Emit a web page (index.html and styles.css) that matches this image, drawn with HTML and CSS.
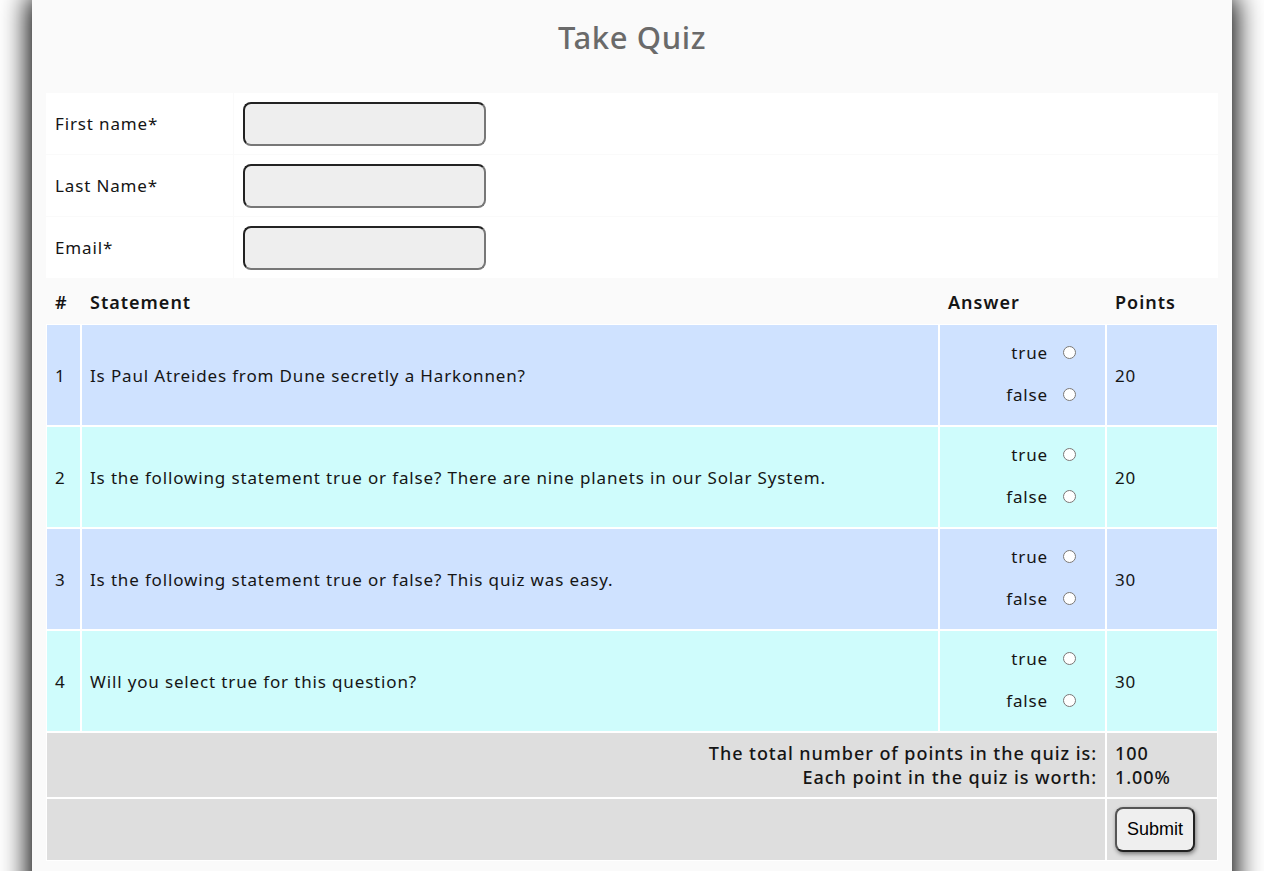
FILE: index.html
```html
<!DOCTYPE html>
<html>
<head>
<meta charset="utf-8">
<title>Take Quiz</title>
<link rel="stylesheet" href="styles.css">
</head>
<body>
<div class="page">
  <h1 class="title">Take Quiz</h1>
  <table class="info">
    <tr><td class="lbl">First name*</td><td><input class="field" type="text"></td></tr>
    <tr><td class="lbl">Last Name*</td><td><input class="field" type="text"></td></tr>
    <tr><td class="lbl">Email*</td><td><input class="field" type="text"></td></tr>
  </table>
  <table class="quiz">
    <thead>
      <tr><th class="c-num">#</th><th class="c-st">Statement</th><th class="c-ans">Answer</th><th class="c-pts">Points</th></tr>
    </thead>
    <tbody>
      <tr class="odd">
        <td>1</td><td>Is Paul Atreides from Dune secretly a Harkonnen?</td>
        <td class="ans"><div class="opt"><span>true</span><input type="radio" name="q1"></div><div class="opt"><span>false</span><input type="radio" name="q1"></div></td>
        <td>20</td>
      </tr>
      <tr class="even">
        <td>2</td><td>Is the following statement true or false? There are nine planets in our Solar System.</td>
        <td class="ans"><div class="opt"><span>true</span><input type="radio" name="q2"></div><div class="opt"><span>false</span><input type="radio" name="q2"></div></td>
        <td>20</td>
      </tr>
      <tr class="odd">
        <td>3</td><td>Is the following statement true or false? This quiz was easy.</td>
        <td class="ans"><div class="opt"><span>true</span><input type="radio" name="q3"></div><div class="opt"><span>false</span><input type="radio" name="q3"></div></td>
        <td>30</td>
      </tr>
      <tr class="even">
        <td>4</td><td>Will you select true for this question?</td>
        <td class="ans"><div class="opt"><span>true</span><input type="radio" name="q4"></div><div class="opt"><span>false</span><input type="radio" name="q4"></div></td>
        <td>30</td>
      </tr>
    </tbody>
    <tfoot>
      <tr class="total">
        <td colspan="3" class="tot-lbl">The total number of points in the quiz is:<br>Each point in the quiz is worth:</td>
        <td class="tot-val">100<br>1.00%</td>
      </tr>
      <tr class="actions">
        <td colspan="3"></td>
        <td><button class="submit" type="button">Submit</button></td>
      </tr>
    </tfoot>
  </table>
</div>
</body>
</html>
```

FILE: styles.css
```css
html, body {
  margin: 0;
  padding: 0;
  background: #fff;
}
body {
  font-family: "Noto Sans", "DejaVu Sans", sans-serif;
  font-size: 17px;
  letter-spacing: 0.85px;
  color: #151515;
  overflow: hidden;
}
.page {
  width: 1172px;
  margin: 0 auto;
  padding: 1px 14px 20px;
  min-height: 900px;
  background: #fafafa;
  box-shadow: 0 0 26px 4px #000;
}
.title {
  margin: 16px 0 35px;
  text-align: center;
  font-size: 31px;
  font-weight: 500;
  letter-spacing: 0.6px;
  color: #6a6a6a;
  line-height: 40px;
}
.info {
  border-collapse: separate;
  border-spacing: 1px;
  margin: 0 -1px;
  width: calc(100% + 2px);
}
.info td {
  background: #fff;
  height: 61px;
  padding: 0 9px;
}
.info td.lbl {
  width: 169px;
}
.field {
  box-sizing: border-box;
  width: 243px;
  height: 44px;
  background: #eee;
  border: 2px solid;
  border-color: #222 #777 #777 #222;
  border-radius: 8px;
  display: block;
  margin: 0;
}
.quiz {
  width: 100%;
  table-layout: fixed;
  border-collapse: separate;
  border-spacing: 0;
  margin-top: 1px;
}
.quiz th {
  text-align: left;
  font-weight: 600;
  font-size: 18px;
  letter-spacing: 1px;
  height: 42px;
  padding: 0 8px;
  border: 1px solid transparent;
  vertical-align: middle;
}
.quiz td {
  border: 1px solid #fff;
  padding: 0 8px;
  vertical-align: middle;
}
.c-num { width: 17px; }
.c-ans { width: 149px; }
.c-pts { width: 94px; }
.quiz tbody td {
  height: 100px;
}
.odd td { background: #cfe2ff; }
.even td { background: #cffcfc; }
.ans {
  text-align: right;
}
.opt {
  display: flex;
  justify-content: flex-end;
  align-items: center;
  height: 42px;
  padding-right: 21px;
}
.opt:last-child {
  margin-bottom: 4px;
}
.opt input {
  margin: 0 0 0 15px;
  width: 13px;
  height: 13px;
}
.total td, .actions td {
  background: #dedede;
}
.total td {
  height: 64px;
  font-size: 18px;
  font-weight: 500;
  letter-spacing: 0.95px;
  line-height: 24px;
}
.tot-lbl {
  text-align: right;
}
.actions td {
  height: 61px;
}
.submit {
  font-family: "Liberation Sans", Arial, sans-serif;
  font-size: 18px;
  letter-spacing: 0;
  color: #000;
  background: #efefef;
  border: 2px solid;
  border-color: #555 #222 #222 #555;
  border-radius: 8px;
  width: 80px;
  height: 45px;
  box-shadow: 1px 2px 4px rgba(0,0,0,.45);
  padding: 0;
}
```
